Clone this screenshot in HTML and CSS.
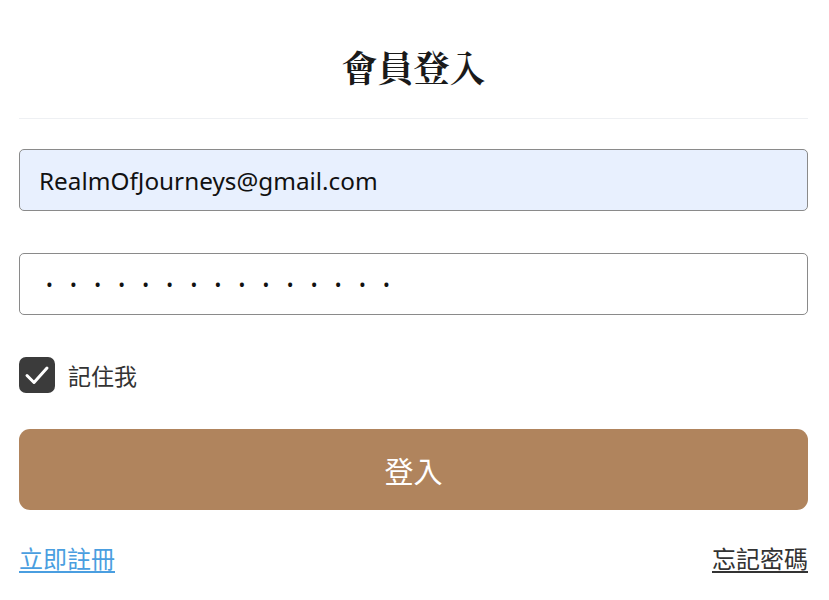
FILE: index.html
```html
<!DOCTYPE html>
<html lang="zh-Hant">
<head>
<meta charset="utf-8">
<link rel="stylesheet" href="styles.css">
</head>
<body>
<div class="login">
  <h1 class="title">會員登入</h1>
  <div class="divider"></div>
  <form class="form">
    <input class="field field-filled" type="email" value="RealmOfJourneys@gmail.com">
    <input class="field field-password" type="password" value="123456789012345">
    <label class="remember">
      <span class="check">
        <svg viewBox="0 0 36 36" width="36" height="36"><path d="M8 18.5 L15 25.5 L28 11" fill="none" stroke="#fff" stroke-width="3" stroke-linecap="round" stroke-linejoin="round"/></svg>
      </span>
      <span class="remember-text">記住我</span>
    </label>
    <button class="submit" type="button">登入</button>
    <div class="links">
      <a class="link link-register" href="#">立即註冊</a>
      <a class="link link-forgot" href="#">忘記密碼</a>
    </div>
  </form>
</div>
</body>
</html>
```
FILE: styles.css
```css
html, body {
  margin: 0;
  padding: 0;
  background: #fff;
}
body {
  font-family: "Noto Sans", "Noto Sans CJK TC", sans-serif;
  color: #222;
}
.login {
  padding: 0 21px 0 19px;
}
.title {
  margin: 0;
  padding-top: 44px;
  height: 74px;
  box-sizing: border-box;
  text-align: center;
  font-family: "Noto Serif CJK TC", "Liberation Serif", serif;
  font-weight: 700;
  font-size: 36px;
  line-height: 46px;
  color: #1a1a1a;
}
.divider {
  height: 1px;
  background: #eef0f3;
  margin-top: 44px;
}
.form {
  display: flex;
  flex-direction: column;
  padding-top: 30px;
}
.field {
  box-sizing: border-box;
  height: 62px;
  width: 100%;
  border: 1px solid #8a8a8a;
  border-radius: 5px;
  padding: 0 19px;
  font-family: "Noto Sans", sans-serif;
  font-size: 24.3px;
  color: #111;
  background: #fff;
  outline: none;
  margin: 0 0 42px 0;
}
.field-filled {
  background: #e8f0fe;
}
.field-password {
  letter-spacing: 17.3px;
  font-size: 18px;
  padding-left: 26px;
}
.remember {
  display: flex;
  align-items: center;
  gap: 13px;
  height: 36px;
}
.check {
  width: 36px;
  height: 36px;
  border-radius: 7px;
  background: #3b3b3b;
  display: flex;
}
.remember-text {
  font-family: "Noto Sans CJK TC", sans-serif;
  font-size: 23px;
  color: #333;
}
.submit {
  margin-top: 36px;
  height: 81px;
  border: none;
  border-radius: 11px;
  background: #b0845d;
  color: #fff;
  font-family: "Noto Sans CJK TC", sans-serif;
  font-size: 29px;
  cursor: pointer;
}
.links {
  display: flex;
  justify-content: space-between;
  margin-top: 28px;
}
.link {
  font-family: "Noto Sans CJK TC", sans-serif;
  font-size: 24px;
  line-height: 40px;
  text-decoration: underline;
  text-underline-offset: 3px;
}
.link-register {
  color: #4a9ee0;
}
.link-forgot {
  color: #333;
}
```
